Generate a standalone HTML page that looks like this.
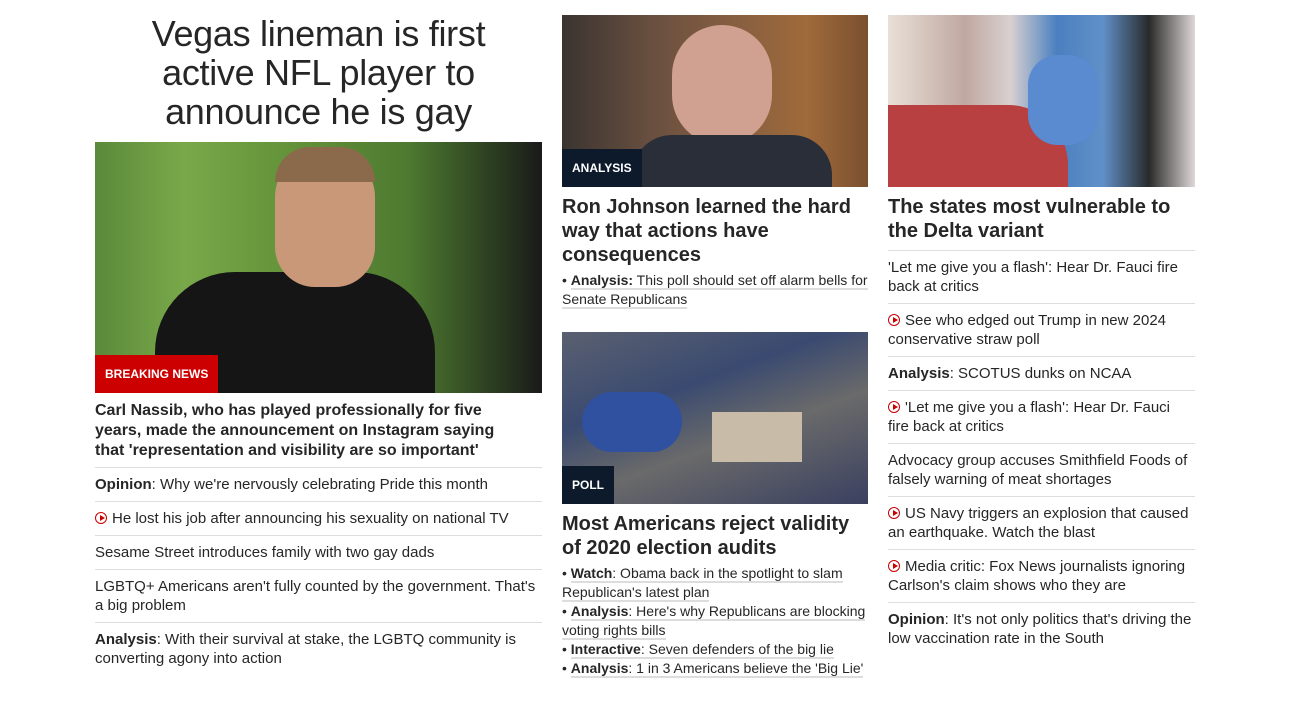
<!DOCTYPE html><html><head><style>
body{margin:0;width:1290px;height:703px;background:#fff;font-family:"Liberation Sans",sans-serif;color:#262626;position:relative;overflow:hidden}
.a{position:absolute}
h1{font-size:36px;font-weight:400;text-align:center;line-height:39px;margin:0;letter-spacing:-.3px;padding:0 30px}
.img{position:absolute;overflow:hidden}
.lbl{position:absolute;left:0;bottom:0;color:#fff;font-weight:700;font-size:12px;padding:0 10px;height:38px;line-height:38px}
.lead{font-weight:700;font-size:16px;line-height:20px}
ul{list-style:none;margin:0;padding:0}
ul.l li{border-top:1px solid #ddd;font-size:15px;line-height:19px;padding:7px 0 7px}
h2{font-size:20px;font-weight:700;line-height:24px;margin:0}
.s{font-size:14px;line-height:19px}
.s span.u{border-bottom:2px solid #ddd}
.p{display:inline-block;width:12px;height:12px;border:1.5px solid #c00;border-radius:50%;box-sizing:border-box;position:relative;vertical-align:-1px;margin-right:5px}
.p:after{content:"";position:absolute;left:3.5px;top:2px;border-left:5px solid #c00;border-top:3px solid transparent;border-bottom:3px solid transparent}
</style></head><body>
<div class="a" style="left:95px;top:14px;width:447px"><h1>Vegas lineman is first active NFL player to announce he is gay</h1></div>
<div class="img" style="left:95px;top:142px;width:447px;height:251px;background:linear-gradient(90deg,#5a8a3a 0%,#79a84a 20%,#6a9a3e 35%,#4e7a30 70%,#2a3a20 90%,#1a1a1a 100%)">
<div class="a" style="left:60px;top:130px;width:280px;height:130px;background:#151515;border-radius:80px 80px 0 0"></div>
<div class="a" style="left:180px;top:10px;width:100px;height:135px;background:#c89878;border-radius:45px 45px 40px 40px"></div>
<div class="a" style="left:180px;top:5px;width:100px;height:35px;background:#8a6a4a;border-radius:45px 45px 0 0"></div>
<div class="lbl" style="background:#c00">BREAKING NEWS</div></div>
<div class="a lead" style="left:95px;top:401px;width:425px">Carl Nassib, who has played professionally for five years, made the announcement on Instagram saying that 'representation and visibility are so important'</div>
<ul class="l a" style="left:95px;top:467px;width:447px">
<li><b>Opinion</b>: Why we're nervously celebrating Pride this month</li>
<li><span class="p"></span>He lost his job after announcing his sexuality on national TV</li>
<li>Sesame Street introduces family with two gay dads</li>
<li>LGBTQ+ Americans aren't fully counted by the government. That's a big problem</li>
<li><b>Analysis</b>: With their survival at stake, the LGBTQ community is converting agony into action</li></ul>

<div class="img" style="left:562px;top:15px;width:306px;height:172px;background:linear-gradient(90deg,#3a3430 0%,#6a5040 30%,#8a6040 60%,#a06a3a 80%,#7a5030 100%)">
<div class="a" style="left:110px;top:10px;width:100px;height:120px;background:#d0a090;border-radius:50px"></div>
<div class="a" style="left:70px;top:120px;width:200px;height:60px;background:#2a2e38;border-radius:40px 40px 0 0"></div>
<div class="lbl" style="background:#0c1a2b;height:38px">ANALYSIS</div></div>
<div class="a" style="left:562px;top:195px;width:306px"><h2>Ron Johnson learned the hard way that actions have consequences</h2>
<div class="s" style="margin-top:4px">• <span class="u"><b>Analysis:</b> This poll should set off alarm bells for</span><br><span class="u">Senate Republicans</span></div></div>

<div class="img" style="left:562px;top:332px;width:306px;height:172px;background:linear-gradient(160deg,#5a6070 0%,#3a4a70 35%,#6a6a6a 60%,#3a4060 100%)">
<div class="a" style="left:150px;top:80px;width:90px;height:50px;background:#c8bca8"></div>
<div class="a" style="left:20px;top:60px;width:100px;height:60px;background:#3050a0;border-radius:30px"></div>
<div class="lbl" style="background:#0c1a2b">POLL</div></div>
<div class="a" style="left:562px;top:512px;width:306px"><h2>Most Americans reject validity of 2020 election audits</h2>
<div class="s" style="margin-top:4px">• <span class="u"><b>Watch</b>: Obama back in the spotlight to slam</span><br><span class="u">Republican's latest plan</span><br>• <span class="u"><b>Analysis</b>: Here's why Republicans are blocking</span><br><span class="u">voting rights bills</span><br>• <span class="u"><b>Interactive</b>: Seven defenders of the big lie</span><br>• <span class="u"><b>Analysis</b>: 1 in 3 Americans believe the 'Big Lie'</span></div></div>

<div class="img" style="left:888px;top:15px;width:307px;height:172px;background:linear-gradient(90deg,#e8e0d8 0%,#c0a8a0 25%,#d8d0d0 40%,#4a80c0 55%,#6090c8 70%,#2a2a2a 85%,#e0d8d8 100%)">
<div class="a" style="left:0;top:90px;width:180px;height:82px;background:#b84040;border-radius:0 60px 0 0"></div>
<div class="a" style="left:140px;top:40px;width:70px;height:90px;background:#5a8ad0;border-radius:30px"></div></div>
<div class="a" style="left:888px;top:195px;width:307px"><h2>The states most vulnerable to the Delta variant</h2>
<ul class="l" style="margin-top:7px">
<li>'Let me give you a flash': Hear Dr. Fauci fire back at critics</li>
<li><span class="p"></span>See who edged out Trump in new 2024 conservative straw poll</li>
<li><b>Analysis</b>: SCOTUS dunks on NCAA</li>
<li><span class="p"></span>'Let me give you a flash': Hear Dr. Fauci fire back at critics</li>
<li>Advocacy group accuses Smithfield Foods of falsely warning of meat shortages</li>
<li><span class="p"></span>US Navy triggers an explosion that caused an earthquake. Watch the blast</li>
<li><span class="p"></span>Media critic: Fox News journalists ignoring Carlson's claim shows who they are</li>
<li><b>Opinion</b>: It's not only politics that's driving the low vaccination rate in the South</li></ul></div>
</body></html>
